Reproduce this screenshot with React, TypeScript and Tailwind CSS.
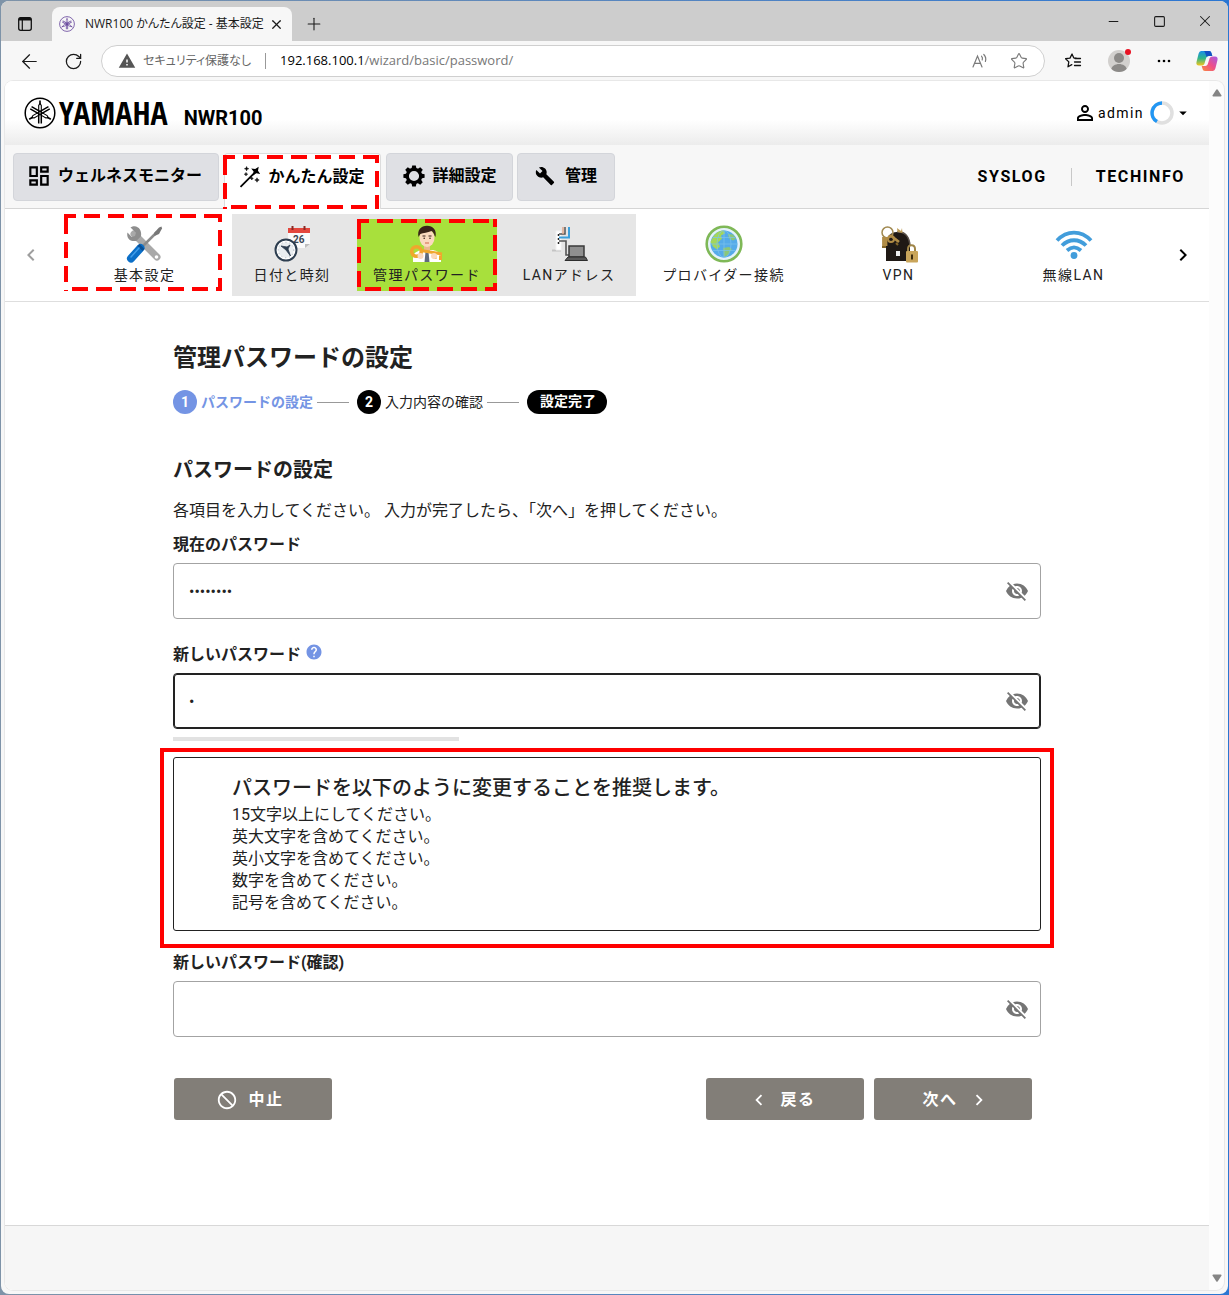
import { useState } from "react"
import type { ReactNode } from "react"
import { ArrowLeft, Minus, Plus, RotateCw, Square, Star, X } from "lucide-react"
import {
  MdArrowDropDown,
  MdBlock,
  MdBuild,
  MdChevronLeft,
  MdChevronRight,
  MdHelp,
  MdOutlineDashboard,
  MdPersonOutline,
  MdVisibility,
  MdVisibilityOff,
  MdWarning,
} from "react-icons/md"

const uiFont = "font-['Open_Sans','Noto_Sans_CJK_JP',sans-serif]"
const pageFont = "font-[Roboto,'Noto_Sans_CJK_JP',sans-serif]"

function TuningForks({ className }: { className: string }) {
  return (
    <svg viewBox="0 0 32 32" className={className} fill="none" stroke="currentColor" aria-hidden="true">
      <circle cx="16" cy="16" r="14.800" strokeWidth="1.500" />
      {[0, 120, 240].map((angle) => (
        <g key={angle} transform={`rotate(${angle} 16 16)`}>
          <path d="M16 3.500v4" strokeWidth="1.600" />
          <path d="M14.700 16V8.500L16 6.500l1.300 2V16" strokeWidth="1.100" />
          <path d="M14.700 16v10.500M17.300 16v10.500" strokeWidth="1.500" />
        </g>
      ))}
    </svg>
  )
}

function TabActionsIcon() {
  return (
    <svg viewBox="0 0 16 16" className="size-4" aria-hidden="true">
      <rect x="1.700" y="1.700" width="12.600" height="12.600" rx="2" fill="none" stroke="#111" strokeWidth="1.300" />
      <path d="M1.700 3.500a2 2 0 0 1 2-2h8.600a2 2 0 0 1 2 2v1H1.700z" fill="#111" />
      <path d="M5.300 4v10" stroke="#111" strokeWidth="1.200" />
    </svg>
  )
}

function ReadAloudIcon() {
  return (
    <svg viewBox="0 0 18 18" className="size-[18px]" fill="none" stroke="#7a7a7a" strokeWidth="1.200" strokeLinecap="round" aria-hidden="true">
      <path d="M2 15 6.500 4 11 15M3.600 11.300h5.800M10.500 4.200c1 1 1.200 2.400.7 3.800M12.800 2.500c2 2 2.400 4.400 1.600 7" />
    </svg>
  )
}

function FavoritesIcon() {
  return (
    <svg viewBox="0 0 18 18" className="size-[18px]" fill="none" stroke="#111" strokeWidth="1.300" strokeLinejoin="round" strokeLinecap="round" aria-hidden="true">
      <path d="M12.500 6.300 9.800 5.900 8 2 6 6.100 1.600 6.700l3.200 3.200L4 14.800l3.800-2.200" />
      <path d="M11 6.500h5.500M10.500 10h6M10.500 13.500h6" />
    </svg>
  )
}

function CopilotIcon() {
  return (
    <svg viewBox="0 0 22 20" className="h-5 w-[22px]" aria-hidden="true">
      <defs>
        <linearGradient id="cpA" x1="0" y1="0" x2="0" y2="1">
          <stop offset="0" stopColor="#1b8fe8" />
          <stop offset=".5" stopColor="#2fb58a" />
          <stop offset="1" stopColor="#f3c61c" />
        </linearGradient>
        <linearGradient id="cpB" x1="1" y1="0" x2="0" y2="1">
          <stop offset="0" stopColor="#a35be8" />
          <stop offset=".5" stopColor="#ee4f88" />
          <stop offset="1" stopColor="#fb8a3c" />
        </linearGradient>
      </defs>
      <path d="M5.500 0h7.500c1.500 0 2 .8 2.500 2.200l.8 2.800h-3.500c-1.600 0-2.300.9-2.800 2.400l-1.500 5C8 13.800 7 14.500 5.500 14.500H3C.8 14.500 0 13 .5 11L2.500 3C3 1 4 0 5.500 0z" fill="url(#cpA)" />
      <path d="M13 0c1.500 0 2 .8 2.500 2.200l.8 2.800h-3.500c-1 0-1.700.3-2.200 1L9 1.500C8.700.5 8 0 7 0z" fill="#1451c4" />
      <path d="M16.500 20H9c-1.500 0-2-.8-2.500-2.200L5.700 15h3.500c1.600 0 2.300-.9 2.800-2.400l1.500-5c.5-1.400 1.500-2.100 3-2.100H19c2.200 0 3 1.500 2.500 3.500l-2 8c-.5 2-1.500 3-3 3z" fill="url(#cpB)" />
    </svg>
  )
}

function WandIcon() {
  return (
    <svg viewBox="0 0 24 24" className="size-6 shrink-0" aria-hidden="true">
      <path d="M2.500 21.800 17 7.300" stroke="#000" strokeWidth="1.800" />
      <path d="m20.700 1.700-.7 4 2.200 3.200-3.900-.6-3.300 2.200.6-4-2.400-3.100 4 .5z" />
      <path d="m8.600 1.600.5 1.600 1.600.5-1.600.5-.5 1.600-.5-1.600-1.600-.5 1.600-.5zM8 7.500l.4 1.300 1.300.4-1.300.4L8 10.900l-.4-1.300-1.300-.4 1.300-.4zM19 12.800l.5 1.700 1.700.5-1.700.5-.5 1.700-.5-1.700-1.700-.5 1.700-.5zM13.800 12l.3 1.200 1.200.3-1.200.3-.3 1.200-.3-1.200-1.200-.3 1.200-.3z" stroke="#000" strokeWidth=".6" />
    </svg>
  )
}

function GearIcon() {
  return (
    <svg viewBox="0 0 24 24" className="size-6 shrink-0" aria-hidden="true">
      <circle cx="12" cy="12" r="6.700" fill="none" stroke="#000" strokeWidth="3.200" />
      {[0, 45, 90, 135, 180, 225, 270, 315].map((angle) => (
        <path key={angle} d="M9.500 5 10.200 1.400h3.600L14.500 5z" transform={`rotate(${angle} 12 12)`} />
      ))}
    </svg>
  )
}

function ToolsIcon() {
  return (
    <svg viewBox="0 0 38 38" className="size-[38px]" aria-hidden="true">
      <path d="M8 9 31 32" stroke="#a9a9a9" strokeWidth="7" strokeLinecap="round" />
      <path d="M4.500 2.500 10 7.800l-1 3.200-3.300 1L1.500 7.500c-1 3.500.5 7 4 8.200 2 .7 3.500.3 5 0l4.500-4.500C16 6 13 1.500 8.500 1.300c-1.500 0-2.700.3-4 1.200z" fill="#8e8e8e" />
      <circle cx="30.500" cy="32" r="1.800" fill="#fff" />
      <path d="M17 21 31 7" stroke="#8b8b8b" strokeWidth="2.500" />
      <path d="M28 8 33 2.500l2.500-1 .5 2L33 9l-4.500 2z" fill="#777" />
      <path d="M5 33.500 14.500 23" stroke="#0c6fc7" strokeWidth="8" strokeLinecap="round" />
      <path d="m12.500 20 5 5" stroke="#084f96" strokeWidth="3" />
      <path d="M5 32 13 23" stroke="#3f9be8" strokeWidth="1.500" strokeLinecap="round" />
    </svg>
  )
}

function CalendarClockIcon() {
  return (
    <svg viewBox="0 0 38 38" className="size-[38px]" aria-hidden="true">
      <path d="M15 4h22v15l-5 4H15z" fill="#fafafa" />
      <path d="m32 23 5-4h-5z" fill="#bdbdbd" />
      <path d="M15 3h22v5H15z" fill="#e4473d" />
      <path d="M19.500 1v4M31.500 1v4" stroke="#8c2a25" strokeWidth="2" />
      <text x="20" y="18" fontSize="10" fontWeight="700" fill="#3a4654" className="tracking-normal">26</text>
      <circle cx="13" cy="25" r="10.500" fill="#fff" stroke="#2d3e50" strokeWidth="2" />
      <circle cx="13" cy="25" r="7.800" fill="#e9edf0" stroke="#9aa5af" strokeWidth=".8" strokeDasharray="1 3" />
      <path d="m13 25-5-4 6 1 3-2-2 4 2.500 7z" fill="#2d3e50" stroke="#2d3e50" strokeWidth=".8" />
    </svg>
  )
}

function KeyPersonIcon() {
  return (
    <svg viewBox="0 0 38 38" className="size-[38px]" aria-hidden="true">
      <path d="M5 37v-5c0-4 5-6 8-7h12c4 1 8 3 8 7v5z" fill="#fff" />
      <path d="M16 20h6v6l-3 2-3-2z" fill="#eab98f" />
      <path d="m17.500 27 1.500-1 1.500 1 1 10h-5z" fill="#5f6b7d" />
      <ellipse cx="19" cy="13" rx="7.500" ry="9" fill="#fbd9bf" />
      <path d="M10.500 12C9 5 13 .8 19 .8S29 5 27.500 12l-1-1.500c-.4-2-1.500-3.500-3-4.500-4 2-8 1.500-11.200 3z" fill="#3a231a" />
      <path d="M14.500 11h3M20.500 11h3" stroke="#3a231a" strokeWidth="1" />
      <circle cx="16.200" cy="13.200" r=".8" fill="#3a231a" />
      <circle cx="22" cy="13.200" r=".8" fill="#3a231a" />
      <path d="M17 18h4" stroke="#d0684c" strokeWidth="1.200" />
      <circle cx="8.500" cy="26.500" r="4.800" fill="none" stroke="#f0a72d" strokeWidth="3.600" />
      <path d="M13 25.500 34 29M27 28v6M32.500 29v6" stroke="#f0a72d" strokeWidth="3" />
      <circle cx="12.500" cy="31" r="3" fill="#fbd9bf" />
      <circle cx="26" cy="31" r="3" fill="#fbd9bf" />
    </svg>
  )
}

function LanIcon() {
  return (
    <svg viewBox="0 0 38 38" className="size-[38px]" fill="none" aria-hidden="true">
      <path d="M2 25.500h9" stroke="#c4c4c4" strokeWidth="2" />
      <path d="M6 6h5v19H6z" fill="#fff" stroke="#f2f2f2" />
      <path d="M8.500 9v12" stroke="#222" strokeWidth="1.500" strokeDasharray="2 2" />
      <path d="M9 9h6V2" stroke="#555" strokeWidth="1.500" />
      <path d="M9 12.500h10V2" stroke="#3aa0dc" strokeWidth="2" />
      <path d="M13 9V2" stroke="#e0a98d" strokeWidth="1.500" />
      <path d="M9 16h7v14h3" stroke="#555" strokeWidth="1.600" />
      <path d="M19 21h15v11H19z" fill="#8f8f8f" stroke="#3a3a3a" strokeWidth="1.500" />
      <path d="m18 32 17.500 0 2 3.500H15z" fill="#5a5a5a" stroke="#2c2c2c" />
    </svg>
  )
}

function GlobeIcon() {
  return (
    <svg viewBox="0 0 38 38" className="size-[38px]" fill="none" aria-hidden="true">
      <circle cx="19" cy="19" r="17.300" fill="#e4f2fb" stroke="#7fb857" strokeWidth="2.600" />
      <circle cx="19" cy="19" r="13.500" fill="#55abe9" />
      <path d="M8 12c3-5 7-6.500 11-6.500l1 3-4 2 1 3-4 4 2 4-3 3-4-3-2.500-4.500z" fill="#a4d65a" />
      <path d="m23 9 5 .5 3 4-3 2-4-2zM18 23l6-1 3 2-4 6-4 2z" fill="#8bc779" />
      <path d="M19 5.500v27M5.500 19h27M8 12.500h22M8 25.500h22" stroke="#7cc3ee" strokeWidth=".7" />
      <ellipse cx="19" cy="19" rx="7" ry="13.500" stroke="#7cc3ee" strokeWidth=".7" />
    </svg>
  )
}

function LockKeysIcon() {
  return (
    <svg viewBox="0 0 38 38" className="size-[38px]" aria-hidden="true">
      <path d="M6 36V19C6 12 10 7 17 7c8 0 13 5 13 13v16z" fill="#1f1915" />
      <path d="M17 7c9-1 12 5 13 13" fill="none" stroke="#584f48" strokeWidth="1.500" />
      <path d="M16 26h4v5h-4z" fill="#eee" />
      <circle cx="7.500" cy="7.500" r="5.500" fill="none" stroke="#a18a52" strokeWidth="1.500" />
      <path d="m17 3 4 3 1-3 .5 5-5-1z" fill="#bf9d57" />
      <path d="M3.500 12v11M6 12v9M10 10l9 7" stroke="#b08c46" strokeWidth="2.800" />
      <path d="M2 22h4M16 18l2 2" stroke="#836529" strokeWidth="2" />
      <circle cx="11" cy="14" r="3" fill="none" stroke="#b08c46" strokeWidth="2" />
      <path d="M28 27v-3c0-5 7-5 7 0v3" fill="none" stroke="#9f8548" strokeWidth="2" />
      <rect x="26" y="26" width="12" height="11.500" rx="1" fill="#c9a55b" />
      <path d="M32 29.500v5" stroke="#3b2c10" strokeWidth="2" />
    </svg>
  )
}

function WifiIcon() {
  return (
    <svg viewBox="0 0 38 38" className="size-[38px]" fill="none" stroke="#429ddb" strokeWidth="3.800" aria-hidden="true">
      <path d="M2 15.500c10-10.500 24-10.500 34 0M7 20.500c7-7 17-7 24 0M12 25.500c4.500-4 9.500-4 14 0" />
      <circle cx="19" cy="30.500" r="3.400" fill="#429ddb" stroke="none" />
    </svg>
  )
}

// Red dashed callout laid over a tab or menu item
function DashedCallout({ className }: { className: string }) {
  return (
    <div className={`pointer-events-none absolute ${className}`}>
      <svg className="size-full overflow-visible" fill="none" stroke="#f00" strokeWidth="4" strokeDasharray="16 8" aria-hidden="true">
        <line x1="0" y1="2" x2="100%" y2="2" strokeDashoffset="4" />
        <line x1="0" y1="100%" x2="100%" y2="100%" transform="translate(0 -2)" strokeDashoffset="-8" />
        <line x1="2" y1="0" x2="2" y2="100%" strokeDashoffset="-4" />
        <line x1="100%" y1="0" x2="100%" y2="100%" transform="translate(-2 0)" strokeDashoffset="8" />
      </svg>
    </div>
  )
}

function MenuItem({ icon, label }: { icon: ReactNode; label: string }) {
  return (
    <button className="flex w-full flex-col items-center gap-px text-sm leading-[22px] tracking-widest whitespace-nowrap text-[#222]">
      {icon}
      {label}
    </button>
  )
}

interface PasswordFieldProps {
  id: string
  label: string
  initial?: string
  focused?: boolean
  help?: boolean
}

function PasswordField({ id, label, initial = "", focused = false, help = false }: PasswordFieldProps) {
  const [value, setValue] = useState(initial)
  const [visible, setVisible] = useState(false)

  return (
    <div>
      <div className="flex gap-1">
        <label htmlFor={id} className="leading-6 font-bold">
          {label}
        </label>
        {help && (
          <button type="button" aria-label="ヘルプ" className="self-start text-[#7494e4]">
            <MdHelp size={18} />
          </button>
        )}
      </div>
      <div
        className={`mt-1.5 flex h-14 items-center rounded border bg-white px-[11px] ${
          focused ? "border-[#222] ring-1 ring-[#222] ring-inset" : "border-[#a3a3a3]"
        }`}
      >
        <input
          id={id}
          type={visible ? "text" : "password"}
          value={value}
          onChange={(e) => setValue(e.target.value)}
          className="h-full min-w-0 flex-1 px-1 text-base outline-none"
        />
        <button
          type="button"
          aria-label="パスワードを表示"
          onClick={() => setVisible(!visible)}
          className="text-[#757575]"
        >
          {visible ? <MdVisibility size={24} /> : <MdVisibilityOff size={24} />}
        </button>
      </div>
    </div>
  )
}

function BrowserBar() {
  return (
    <div className={`${uiFont} text-[#1a1a1a]`}>
      <div className="flex h-10 items-end bg-[#cdcdcd]">
        <button aria-label="タブ操作メニュー" className="flex h-full w-[51px] items-center justify-center pt-1.5 pr-1">
          <TabActionsIcon />
        </button>
        <div className="flex h-[34px] w-60 items-center rounded-t-lg bg-[#f7f7f7] pr-2 pl-[7px]">
          <TuningForks className="size-4 shrink-0 text-[#5b3894]" />
          <span className="ml-2.5 flex-1 overflow-hidden text-xs whitespace-nowrap [font-feature-settings:'palt']">
            NWR100 かんたん設定 - 基本設定
          </span>
          <button aria-label="タブを閉じる">
            <X size={15} strokeWidth={2} />
          </button>
        </div>
        <button aria-label="新しいタブ" className="flex h-[34px] w-11 items-center justify-center">
          <Plus size={20} strokeWidth={1.3} />
        </button>
        <div className="ml-auto flex h-full">
          <button aria-label="最小化" className="flex w-[46px] items-center justify-center">
            <Minus size={15} strokeWidth={1.7} />
          </button>
          <button aria-label="最大化" className="flex w-[46px] items-center justify-center">
            <Square size={13} strokeWidth={2} />
          </button>
          <button aria-label="閉じる" className="flex w-[46px] items-center justify-center">
            <X size={18} strokeWidth={1.4} />
          </button>
        </div>
      </div>

      <div className="flex h-10 items-center">
        <button aria-label="戻る" className="flex w-14 justify-center">
          <ArrowLeft size={23} strokeWidth={1.3} />
        </button>
        <button aria-label="更新" className="flex w-8 justify-center">
          <RotateCw size={19} strokeWidth={1.6} />
        </button>
        <div className="ml-3 flex h-8 flex-1 items-center rounded-full border border-[#cfcfcf] bg-white px-4 text-[13px]">
          <MdWarning size={18} className="text-[#555]" />
          <span className="ml-[7px] text-xs text-[#666] [font-feature-settings:'palt']">セキュリティ保護なし</span>
          <span className="mx-3.5 h-4 w-px bg-[#999]" />
          <span className="text-[#777]">
            <span className="text-black">192.168.100.1</span>/wizard/basic/password/
          </span>
          <button aria-label="音声で読み上げる" className="ml-auto">
            <ReadAloudIcon />
          </button>
          <button aria-label="お気に入りに追加" className="ml-[21px] text-[#7a7a7a]">
            <Star size={18} strokeWidth={1.5} />
          </button>
        </div>
        <div className="flex h-full items-center">
          <button aria-label="お気に入り" className="flex w-14 justify-center">
            <FavoritesIcon />
          </button>
          <button aria-label="プロファイル" className="relative ml-[7px]">
            <svg viewBox="0 0 22 22" className="size-[22px] rounded-full bg-[#d2d0ce] text-[#8c8a88]" fill="currentColor" aria-hidden="true">
              <circle cx="11" cy="8" r="5" />
              <path d="M3 20c1-8 15-8 16 0l-3 2H6z" />
            </svg>
            <span className="absolute -top-px -right-px size-1.5 rounded-full bg-[#e81123]" />
          </button>
          <button aria-label="設定など" className="flex w-[68px] justify-center">
            <svg viewBox="0 0 14 4" className="h-1 w-3.5" aria-hidden="true">
              <circle cx="2" cy="2" r="1.300" />
              <circle cx="7" cy="2" r="1.300" />
              <circle cx="12" cy="2" r="1.300" />
            </svg>
          </button>
          <button aria-label="Copilot" className="mr-2.5 -ml-0.5">
            <CopilotIcon />
          </button>
        </div>
      </div>
    </div>
  )
}

function SiteHeader() {
  return (
    <header className="flex h-16 items-center justify-between bg-linear-to-b from-white from-60% to-[#ececec] pr-[17px] pl-[19px]">
      <div className="flex items-center">
        <TuningForks className="size-8 text-black" />
        <span className="ml-[3px] font-['Liberation_Sans_Narrow','Open_Sans_Condensed','Noto_Sans_ExtraCondensed','Roboto_Condensed',sans-serif] text-[32px] leading-8 font-bold text-black">
          YAMAHA
        </span>
        <span className="ml-4 pt-2.5 text-xl font-bold text-black">NWR100</span>
      </div>
      <button className="flex items-center text-sm tracking-widest text-black">
        <MdPersonOutline size={24} />
        <span className="ml-px">admin</span>
        <svg viewBox="0 0 24 24" className="ml-1.5 size-6" fill="none" strokeWidth="3.500" aria-hidden="true">
          <circle cx="12" cy="12" r="10" stroke="#e0e0e0" />
          <path d="M12 2a10 10 0 0 0-5 18.600" stroke="#2196f3" />
        </svg>
        <MdArrowDropDown size={18} />
      </button>
    </header>
  )
}

const mainTab = "flex h-12 items-center justify-center rounded border border-[#d3d5da] bg-[#dfe0e4] pb-0.5"

function MainTabs() {
  return (
    <nav className="flex h-16 items-start border-b border-[#d5d5d5] bg-[#f7f7f7] px-2 pt-2 font-bold text-black">
      <button className={`${mainTab} w-[206px] gap-1.5 pr-1`}>
        <MdOutlineDashboard size={26} />
        ウェルネスモニター
      </button>
      <button className="relative ml-[5px] flex h-14 w-[157px] justify-center gap-1.5 rounded-t border border-b-0 border-[#dcdcdc] bg-white pt-[11px] pr-0.5">
        <WandIcon />
        <span>かんたん設定</span>
        <DashedCallout className="top-px right-px bottom-0 -left-0.5" />
      </button>
      <button className={`${mainTab} ml-[5px] w-[127px] gap-1.5`}>
        <GearIcon />
        詳細設定
      </button>
      <button className={`${mainTab} ml-1 w-[98px] gap-2.5`}>
        <MdBuild size={20} />
        管理
      </button>
      <div className="mt-3 mr-4 ml-auto flex items-center tracking-widest">
        <a href="#syslog">SYSLOG</a>
        <span className="mx-6 h-[18px] w-px bg-[#c8c8c8]" />
        <a href="#techinfo">TECHINFO</a>
      </div>
    </nav>
  )
}

function WizardMenu() {
  return (
    <nav className="flex border-b border-[#dedede] py-[5px]">
      <button aria-label="前へ" className="flex w-[52px] items-center justify-center text-[#9e9e9e]">
        <MdChevronLeft size={24} />
      </button>
      <div className="relative flex-1 pt-[11px]">
        <MenuItem icon={<ToolsIcon />} label="基本設定" />
        <DashedCallout className="top-0 right-2.5 bottom-[5px] left-[7px]" />
      </div>
      <div className="flex h-[82px] bg-[#e6e6e6]">
        <div className="w-[120px] pt-[11px]">
          <MenuItem icon={<CalendarClockIcon />} label="日付と時刻" />
        </div>
        <div className="relative my-[5px] ml-[5px] w-[140px] bg-[#a8e03c] pt-1.5">
          <MenuItem icon={<KeyPersonIcon />} label="管理パスワード" />
          <DashedCallout className="inset-0" />
        </div>
        <div className="ml-[5px] w-[134px] pt-[11px]">
          <MenuItem icon={<LanIcon />} label="LANアドレス" />
        </div>
      </div>
      <div className="flex-1 pt-[11px]">
        <MenuItem icon={<GlobeIcon />} label="プロバイダー接続" />
      </div>
      <div className="flex-1 pt-[11px]">
        <MenuItem icon={<LockKeysIcon />} label="VPN" />
      </div>
      <div className="flex-1 pt-[11px]">
        <MenuItem icon={<WifiIcon />} label="無線LAN" />
      </div>
      <button aria-label="次へ" className="flex w-12 items-center justify-center pr-1 text-black">
        <MdChevronRight size={24} />
      </button>
    </nav>
  )
}

function Steps() {
  return (
    <ol className="mt-3.5 flex h-6 items-center text-sm">
      <li className="flex items-center gap-1 font-bold text-[#7494e4]">
        <span className="flex size-6 items-center justify-center rounded-full bg-[#7494e4] text-white">1</span>
        パスワードの設定
      </li>
      <li className="mx-1 h-px w-8 bg-[#999]" aria-hidden="true" />
      <li className="ml-1 flex items-center gap-1">
        <span className="flex size-6 items-center justify-center rounded-full bg-black font-bold text-white">2</span>
        入力内容の確認
      </li>
      <li className="mx-1 h-px w-8 bg-[#999]" aria-hidden="true" />
      <li className="ml-1 flex h-6 w-20 items-center justify-center rounded-full bg-black pb-0.5 pl-0.5 font-bold text-white">
        設定完了
      </li>
    </ol>
  )
}

const advice = [
  "15文字以上にしてください。",
  "英大文字を含めてください。",
  "英小文字を含めてください。",
  "数字を含めてください。",
  "記号を含めてください。",
]

const actionButton =
  "flex h-[42px] w-[158px] items-center justify-center gap-2.5 rounded-[3px] bg-[#827e78] pt-0.5 font-bold tracking-widest text-white"

function PasswordForm() {
  return (
    <main className="mx-auto w-full max-w-[868px] flex-1 pt-[38px] pb-[105px] text-[#222]">
      <h1 className="text-2xl leading-9 font-bold">管理パスワードの設定</h1>
      <Steps />

      <form onSubmit={(e) => e.preventDefault()}>
        <h2 className="mt-[42px] text-xl leading-7 font-bold">パスワードの設定</h2>
        <p className="mt-[15px] mb-2.5 leading-6">
          各項目を入力してください。 入力が完了したら、「次へ」を押してください。
        </p>

        <PasswordField id="current" label="現在のパスワード" initial="password" />
        <div className="mt-6">
          <PasswordField id="new" label="新しいパスワード" initial="p" focused help />
        </div>
        <div className="mt-2 h-1 w-[33%] bg-[#e2e2e2]" />

        <section className="relative mt-4 mb-5 rounded-[3px] border border-[#222] px-[58px] pt-[15px] pb-4">
          <h3 className="text-xl leading-[31px] font-medium">パスワードを以下のように変更することを推奨します。</h3>
          <ul className="leading-[22px]">
            {advice.map((line) => (
              <li key={line}>{line}</li>
            ))}
          </ul>
          <div className="pointer-events-none absolute -inset-x-3.5 -top-2.5 -bottom-[18px] border-4 border-[#f00]" />
        </section>

        <PasswordField id="confirm" label="新しいパスワード(確認)" />

        <div className="mt-[41px] flex gap-2.5 pr-[9px] pl-px">
          <button type="button" className={`${actionButton} mr-auto pr-1.5`}>
            <MdBlock size={22} className="rotate-90" />
            中止
          </button>
          <button type="button" className={`${actionButton} pr-1.5`}>
            <MdChevronLeft size={22} />
            戻る
          </button>
          <button type="submit" className={`${actionButton} pl-1.5`}>
            次へ
            <MdChevronRight size={22} />
          </button>
        </div>
      </form>
    </main>
  )
}

export default function App() {
  return (
    <div className="flex min-h-screen flex-col bg-linear-to-r from-[#7e93a8] to-[#2a76d2] p-px">
      <div className="flex flex-1 flex-col overflow-hidden rounded-lg bg-[#f7f7f7] px-1 pb-1">
        <div className="-mx-1">
          <BrowserBar />
        </div>
        <div className={`flex flex-1 overflow-hidden rounded-lg bg-[#fcfcfc] ring-1 ring-[#e8e8e8] ${pageFont}`}>
          <div className="flex min-w-0 flex-1 flex-col bg-white">
            <SiteHeader />
            <MainTabs />
            <WizardMenu />
            <PasswordForm />
            <footer className="h-[65px] border-t border-[#d8d8d8] bg-[#f6f6f6]" />
          </div>
          <div className="flex w-[15px] flex-col items-center justify-between py-2 text-[#858585]" aria-hidden="true">
            <svg viewBox="0 0 10 8" className="h-2 w-2.5" fill="currentColor">
              <path d="M4.200.8a1 1 0 0 1 1.600 0l3.600 5.400c.4.700 0 1.300-.8 1.300H1.400c-.8 0-1.200-.6-.8-1.300z" />
            </svg>
            <svg viewBox="0 0 10 8" className="h-2 w-2.5 rotate-180" fill="currentColor">
              <path d="M4.200.8a1 1 0 0 1 1.600 0l3.600 5.400c.4.700 0 1.300-.8 1.300H1.400c-.8 0-1.200-.6-.8-1.300z" />
            </svg>
          </div>
        </div>
      </div>
    </div>
  )
}
